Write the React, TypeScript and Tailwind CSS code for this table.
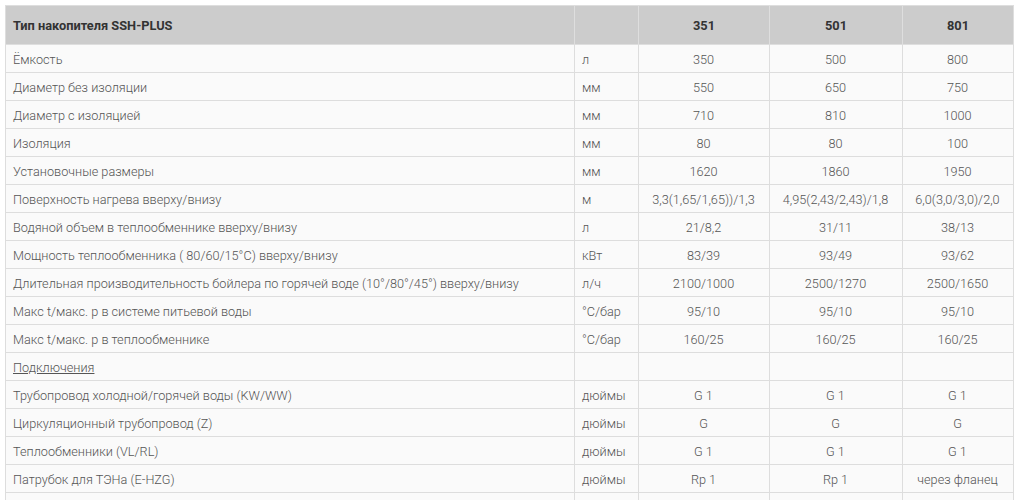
const rows: [string, string, string, string, string][] = [
  ["Ёмкость", "л", "350", "500", "800"],
  ["Диаметр без изоляции", "мм", "550", "650", "750"],
  ["Диаметр с изоляцией", "мм", "710", "810", "1000"],
  ["Изоляция", "мм", "80", "80", "100"],
  ["Установочные размеры", "мм", "1620", "1860", "1950"],
  ["Поверхность нагрева вверху/внизу", "м", "3,3(1,65/1,65))/1,3", "4,95(2,43/2,43)/1,8", "6,0(3,0/3,0)/2,0"],
  ["Водяной объем в теплообменнике вверху/внизу", "л", "21/8,2", "31/11", "38/13"],
  ["Мощность теплообменника ( 80/60/15°C) вверху/внизу", "кВт", "83/39", "93/49", "93/62"],
  ["Длительная производительность бойлера по горячей воде (10°/80°/45°) вверху/внизу", "л/ч", "2100/1000", "2500/1270", "2500/1650"],
  ["Макс t/макс. p в системе питьевой воды", "°C/бар", "95/10", "95/10", "95/10"],
  ["Макс t/макс. p в теплообменнике", "°C/бар", "160/25", "160/25", "160/25"],
  ["Подключения", "", "", "", ""],
  ["Трубопровод холодной/горячей воды (KW/WW)", "дюймы", "G 1", "G 1", "G 1"],
  ["Циркуляционный трубопровод (Z)", "дюймы", "G", "G", "G"],
  ["Теплообменники (VL/RL)", "дюймы", "G 1", "G 1", "G 1"],
  ["Патрубок для ТЭНа (E-HZG)", "дюймы", "Rp 1", "Rp 1", "через фланец"],
  ["", "", "", "", ""],
];

const cell = "border border-[#dddddd] h-[28px] pl-[7px] pr-2 pt-[3px] align-middle";

export default function App() {
  return (
    <div className="bg-white w-[1021px] h-[500px] overflow-hidden pt-[5px] pl-[5px] font-['Roboto',sans-serif] text-[12.7px] font-light text-[#555555]">
      <table className="border-collapse table-fixed w-[1008px]">
        <colgroup>
          <col className="w-[569px]" />
          <col className="w-[64px]" />
          <col className="w-[131px]" />
          <col className="w-[133px]" />
          <col className="w-[111px]" />
        </colgroup>
        <thead>
          <tr className="bg-[#cccccc] text-[#333333] text-[12.8px] font-bold">
            <th className="border border-[#dedede] h-[39px] pl-[7px] pr-2 pt-[2px] text-left">Тип накопителя SSH-PLUS</th>
            <th className="border border-[#dedede] px-2"></th>
            <th className="border border-[#dedede] px-2 pt-[2px] text-center">351</th>
            <th className="border border-[#dedede] px-2 pt-[2px] text-center">501</th>
            <th className="border border-[#dedede] px-2 pt-[2px] text-center">801</th>
          </tr>
        </thead>
        <tbody>
          {rows.map((r, i) => (
            <tr key={i} className="bg-[#fafafa]">
              <td className={`${cell} text-left`}>
                {r[0] === "Подключения" ? <span className="underline">{r[0]}</span> : r[0]}
              </td>
              <td className={`${cell} text-left`}>{r[1]}</td>
              <td className={`${cell} text-center`}>{r[2]}</td>
              <td className={`${cell} text-center`}>{r[3]}</td>
              <td className={`${cell} text-center`}>{r[4]}</td>
            </tr>
          ))}
        </tbody>
      </table>
    </div>
  );
}
